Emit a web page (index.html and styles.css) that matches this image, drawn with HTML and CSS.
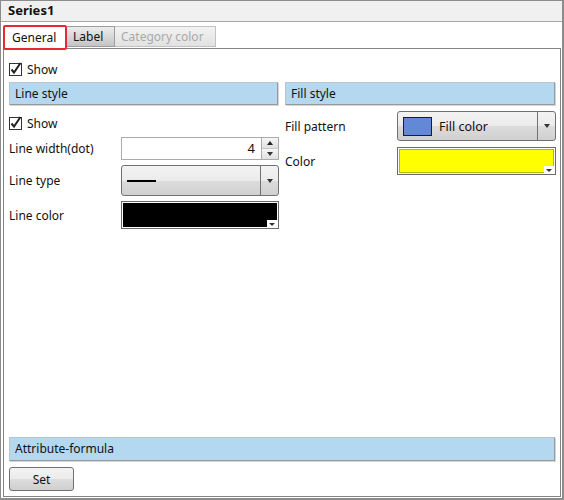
FILE: index.html
```html
<!DOCTYPE html>
<html>
<head>
<meta charset="utf-8">
<link rel="stylesheet" href="styles.css">
</head>
<body>
<div class="window">
  <div class="title">Series1</div>
  <div class="tabs">
    <div class="tab tab-active">General</div>
    <div class="tab tab-normal">Label</div>
    <div class="tab tab-disabled">Category color</div>
  </div>
  <div class="panel">
    <div class="check-row top-show">
      <svg class="cb" width="14" height="14" viewBox="0 0 14 14"><rect x="0.5" y="1.5" width="12" height="12" fill="#fff" stroke="#333"/><path d="M2.5 7.5 L5 10.5 L11.5 1" fill="none" stroke="#222" stroke-width="2"/></svg>
      <span>Show</span>
    </div>
    <div class="columns">
      <div class="col col-left">
        <div class="bar">Line style</div>
        <div class="check-row left-show">
          <svg class="cb" width="14" height="14" viewBox="0 0 14 14"><rect x="0.5" y="1.5" width="12" height="12" fill="#fff" stroke="#333"/><path d="M2.5 7.5 L5 10.5 L11.5 1" fill="none" stroke="#222" stroke-width="2"/></svg>
          <span>Show</span>
        </div>
        <div class="field row-width">
          <span class="lbl">Line width(dot)</span>
          <div class="spinner">
            <div class="spin-text">4</div>
            <div class="spin-btns">
              <div class="spin-up"><span class="tri-up"></span></div>
              <div class="spin-down"><span class="tri-down"></span></div>
            </div>
          </div>
        </div>
        <div class="field row-type">
          <span class="lbl">Line type</span>
          <div class="combo">
            <div class="combo-val"><span class="line-sample"></span></div>
            <div class="combo-arrow"><span class="tri-down"></span></div>
          </div>
        </div>
        <div class="field row-color">
          <span class="lbl">Line color</span>
          <div class="colorbox">
            <div class="swatch swatch-black"></div>
            <div class="notch"><span class="tri-down small"></span></div>
          </div>
        </div>
      </div>
      <div class="col col-right">
        <div class="bar">Fill style</div>
        <div class="field row-pattern">
          <span class="lbl">Fill pattern</span>
          <div class="combo">
            <div class="combo-val"><span class="fill-swatch"></span><span class="fill-text">Fill color</span></div>
            <div class="combo-arrow"><span class="tri-down"></span></div>
          </div>
        </div>
        <div class="field row-fcolor">
          <span class="lbl">Color</span>
          <div class="colorbox">
            <div class="swatch swatch-yellow"></div>
            <div class="notch"><span class="tri-down small"></span></div>
          </div>
        </div>
      </div>
    </div>
    <div class="spacer"></div>
    <div class="bar bar-wide">Attribute-formula</div>
    <button class="btn">Set</button>
  </div>
</div>
</body>
</html>
```
FILE: styles.css
```css
* { box-sizing: border-box; }
html, body { margin: 0; padding: 0; background: #fff; }
body {
  font-family: "Noto Sans", "Liberation Sans", sans-serif;
  font-size: 12px;
  color: #111;
}
.window {
  width: 564px;
  height: 500px;
  border: 1px solid #8c8c8c;
  border-right-width: 2px;
  border-bottom-width: 2px;
  display: flex;
  flex-direction: column;
  background: #fff;
}
.title {
  height: 21px;
  background: #f0f0f0;
  border-bottom: 1px solid #a8a8a8;
  font-weight: bold;
  font-size: 13px;
  line-height: 19px;
  padding-left: 7px;
  color: #111;
}
.tabs {
  display: flex;
  align-items: flex-start;
  height: 26px;
  padding-left: 2px;
  padding-top: 3px;
}
.tab {
  height: 21px;
  line-height: 19px;
  padding: 0 6px;
  white-space: nowrap;
}
.tab-active {
  position: relative;
  z-index: 1;
  height: 25px;
  width: 64px;
  border: 2px solid #e52b2f;
  border-radius: 2px;
  background: #fff;
  line-height: 22px;
  padding: 0 0 0 7px;
  color: #111;
}
.tab-normal {
  margin-top: 1px;
  width: 48px;
  border: 1px solid #9c9c9c;
  border-left: none;
  background: linear-gradient(#ececec, #c4c4c4);
  padding-left: 6px;
  color: #111;
}
.tab-disabled {
  margin-top: 1px;
  width: 101px;
  border: 1px solid #c2c2c2;
  border-left: none;
  background: linear-gradient(#f2f2f2, #e2e2e2);
  color: #a9a9a9;
  padding-left: 6px;
}
.panel {
  flex: 1;
  margin: 0 1px 1px 2px;
  border: 1px solid #858585;
  padding: 10px 4px 5px 5px;
  display: flex;
  flex-direction: column;
}
.check-row {
  display: flex;
  align-items: center;
  height: 21px;
}
.cb { display: block; margin-right: 4px; margin-top: -1px; }
.columns {
  display: flex;
  gap: 6px;
  margin-top: 2px;
}
.col { display: flex; flex-direction: column; }
.col-left { width: 270px; }
.col-right { width: 271px; }
.bar {
  height: 23px;
  width: calc(100% - 1px);
  background: #b4d8f0;
  border: 1px solid #b8c6d0;
  border-right-color: #9a9a9a;
  border-bottom-color: #9a9a9a;
  box-shadow: 1px 1px 0 #d4d4d4;
  line-height: 22px;
  padding-left: 5px;
  color: #111;
}
.left-show { margin-top: 8px; }
.field {
  display: flex;
  align-items: center;
}
.lbl { width: 112px; flex: none; }
.row-width { margin-top: 3px; height: 23px; }
.row-type { margin-top: 5px; height: 31px; }
.row-color { margin-top: 5px; height: 28px; }
.row-pattern { margin-top: 6px; height: 30px; }
.row-fcolor { margin-top: 6px; height: 28px; }
.spinner {
  flex: 1;
  height: 23px;
  display: flex;
  border: 1px solid #ababab;
  background: #fff;
}
.spin-text {
  flex: 1;
  text-align: right;
  padding-right: 6px;
  line-height: 20px;
  font-size: 13px;
}
.spin-btns {
  width: 17px;
  display: flex;
  flex-direction: column;
  border-left: 1px solid #ababab;
}
.spin-up, .spin-down {
  flex: 1;
  display: flex;
  align-items: center;
  justify-content: center;
  background: linear-gradient(#f6f6f6, #e0e0e0);
}
.spin-up { border-bottom: 1px solid #c8c8c8; }
.tri-up {
  width: 0; height: 0;
  border-left: 3.5px solid transparent;
  border-right: 3.5px solid transparent;
  border-bottom: 4px solid #222;
}
.tri-down {
  width: 0; height: 0;
  border-left: 3.5px solid transparent;
  border-right: 3.5px solid transparent;
  border-top: 4px solid #333;
}
.tri-down.small {
  border-left-width: 3px;
  border-right-width: 3px;
  border-top-width: 3px;
}
.combo {
  flex: 1;
  height: 100%;
  display: flex;
  border: 1px solid #707070;
  border-radius: 3px;
  background: linear-gradient(#f3f3f3 0%, #ebebeb 50%, #dcdcdc 51%, #d0d0d0 100%);
}
.combo-val {
  flex: 1;
  display: flex;
  align-items: center;
  padding-left: 5px;
  border-right: 1px solid #707070;
}
.combo-arrow {
  width: 17px;
  display: flex;
  align-items: center;
  justify-content: center;
}
.line-sample {
  display: block;
  width: 29px;
  height: 2px;
  background: #000;
}
.fill-swatch {
  display: block;
  width: 29px;
  height: 19px;
  background: #6189d8;
  border: 1px solid #1c1c2c;
  margin-right: 7px;
}
.fill-text { font-size: 12.5px; }
.colorbox {
  flex: 1;
  height: 100%;
  border: 1px solid #6a6a6a;
  padding: 1px;
  background: #fff;
  position: relative;
}
.swatch { height: 100%; }
.swatch-black { background: #000; }
.swatch-yellow { background: #ffff00; border: 1px solid #b8b800; }
.notch {
  position: absolute;
  right: 1px;
  bottom: 1px;
  width: 10px;
  height: 7px;
  background: #fff;
  display: flex;
  align-items: center;
  justify-content: center;
  padding-top: 1px;
}
.spacer { flex: 1; }
.bar-wide {
  width: calc(100% - 1px);
  height: 24px;
  line-height: 22px;
}
.btn {
  margin-top: 6px;
  width: 65px;
  height: 24px;
  border: 1px solid #707070;
  border-radius: 3px;
  background: linear-gradient(#f3f3f3 0%, #ebebeb 50%, #dddddd 51%, #cfcfcf 100%);
  font-family: "Noto Sans", "Liberation Sans", sans-serif;
  font-size: 12px;
  color: #111;
  padding: 0;
}
```
